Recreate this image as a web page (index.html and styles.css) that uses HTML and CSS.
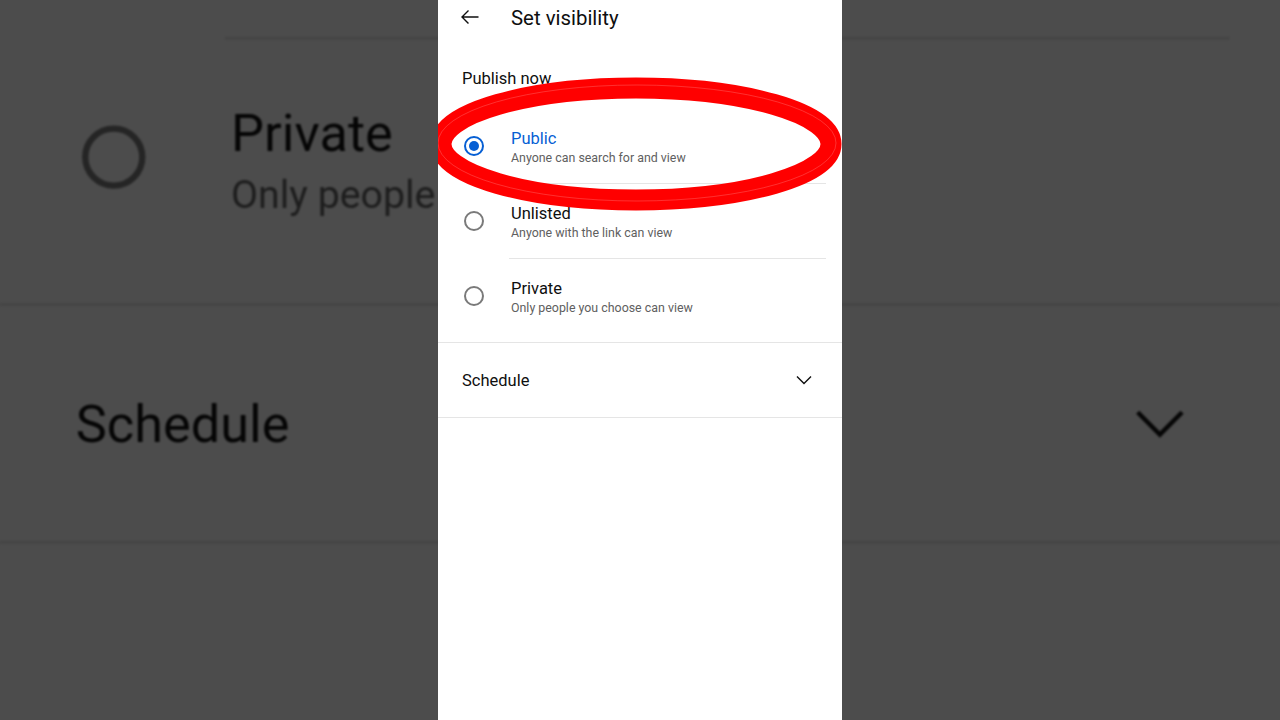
FILE: index.html
```html
<!DOCTYPE html>
<html lang="en">
<head>
  <meta charset="UTF-8">
  <title>Set visibility</title>
  <link rel="stylesheet" href="styles.css">
</head>
<body>
  <div class="backdrop" aria-hidden="true">
    <div class="screen">
      <div class="topbar">
        <svg class="back" width="20" height="20" viewBox="0 0 20 20"><path d="M18.5 10H2M8.5 3.5L2 10l6.5 6.5" fill="none" stroke="#0f0f0f" stroke-width="1.4"/></svg>
        <span class="title">Set visibility</span>
      </div>
      <div class="label">Publish now</div>
      <div class="options">
        <div class="option">
          <span class="radio on"></span>
          <div class="option-body">
            <div class="option-title blue">Public</div>
            <div class="option-sub">Anyone can search for and view</div>
          </div>
        </div>
        <div class="option">
          <span class="radio"></span>
          <div class="option-body">
            <div class="option-title">Unlisted</div>
            <div class="option-sub">Anyone with the link can view</div>
          </div>
        </div>
        <div class="option">
          <span class="radio"></span>
          <div class="option-body last">
            <div class="option-title">Private</div>
            <div class="option-sub">Only people you choose can view</div>
          </div>
        </div>
      </div>
      <div class="schedule">
        <span>Schedule</span>
        <svg width="24" height="24" viewBox="0 0 24 24"><path d="M5 8.5l7 7 7-7" fill="none" stroke="#0f0f0f" stroke-width="1.4"/></svg>
      </div>
    </div>
  </div>

  <div class="stage">
    <div class="screen phone">
      <div class="topbar">
        <svg class="back" width="20" height="20" viewBox="0 0 20 20"><path d="M18.5 10H2M8.5 3.5L2 10l6.5 6.5" fill="none" stroke="#0f0f0f" stroke-width="1.4"/></svg>
        <span class="title">Set visibility</span>
      </div>
      <div class="label">Publish now</div>
      <div class="options">
        <div class="option">
          <span class="radio on"></span>
          <div class="option-body">
            <div class="option-title blue">Public</div>
            <div class="option-sub">Anyone can search for and view</div>
          </div>
        </div>
        <div class="option">
          <span class="radio"></span>
          <div class="option-body">
            <div class="option-title">Unlisted</div>
            <div class="option-sub">Anyone with the link can view</div>
          </div>
        </div>
        <div class="option">
          <span class="radio"></span>
          <div class="option-body last">
            <div class="option-title">Private</div>
            <div class="option-sub">Only people you choose can view</div>
          </div>
        </div>
      </div>
      <div class="schedule">
        <span>Schedule</span>
        <svg width="24" height="24" viewBox="0 0 24 24"><path d="M5 8.5l7 7 7-7" fill="none" stroke="#0f0f0f" stroke-width="1.4"/></svg>
      </div>

      <!-- red marker circle drawn over the Public row -->
      <svg class="marker" width="404" height="240" viewBox="0 0 404 240">
        <ellipse cx="198" cy="144" rx="195" ry="56" fill="none" stroke="#ff0000" stroke-width="21"/>
        <ellipse cx="199" cy="143" rx="199" ry="58" fill="none" stroke="#ff8a8a" stroke-width="1" opacity=".35"/>
      </svg>
    </div>
  </div>
</body>
</html>
```

FILE: styles.css
```css
html, body { margin: 0; padding: 0; height: 100%; }
body { background: #4c4c4c; font-family: Roboto, "Noto Sans", sans-serif; color: #0f0f0f; overflow: hidden; width: 1280px; height: 720px; position: relative; }

.stage { height: 720px; display: flex; justify-content: center; position: relative; }
.backdrop { position: absolute; inset: 0; display: flex; justify-content: center; overflow: hidden; }
.backdrop .screen { transform: scale(3.17); transform-origin: 50% 50%; filter: brightness(.3) blur(.4px); }

.screen { width: 404px; height: 720px; background: #fff; display: flex; flex-direction: column; flex-shrink: 0; }
.phone { position: relative; overflow: hidden; }

.topbar { height: 36px; display: flex; align-items: center; padding-left: 22px; }
.back { margin-right: 31px; margin-top: -3px; }
.title { font-size: 20.4px; }

.label { font-size: 16.5px; line-height: 20px; padding: 33px 0 0 24px; }

.options { padding: 20px 0 8px 0; border-bottom: 1px solid #e5e5e5; }
.option { display: flex; align-items: center; height: 75px; padding-left: 26px; }
.radio { width: 16px; height: 16px; border: 2px solid #7a7a7a; border-radius: 50%; flex-shrink: 0; margin-right: 27px; position: relative; margin-top: -2px; }
.radio.on { border-color: #065fd4; }
.radio.on::after { content: ""; position: absolute; left: 3px; top: 3px; width: 10px; height: 10px; border-radius: 50%; background: #065fd4; }
.option-body { flex: 1; height: 75px; display: flex; flex-direction: column; justify-content: center; border-bottom: 1px solid #e5e5e5; margin-right: 16px; padding-left: 2px; margin-left: -2px; box-sizing: border-box; padding-top: 1px; }
.option-body.last { border-bottom: none; }
.option-title { font-size: 16.5px; line-height: 21px; }
.option-title.blue { color: #065fd4; }
.option-sub { font-size: 12.4px; line-height: 17px; color: #606060; }

.schedule { height: 74px; display: flex; align-items: center; justify-content: space-between; padding: 0 26px 0 24px; font-size: 16.5px; border-bottom: 1px solid #e5e5e5; }

.marker { position: absolute; left: 0; top: 0; }
```
